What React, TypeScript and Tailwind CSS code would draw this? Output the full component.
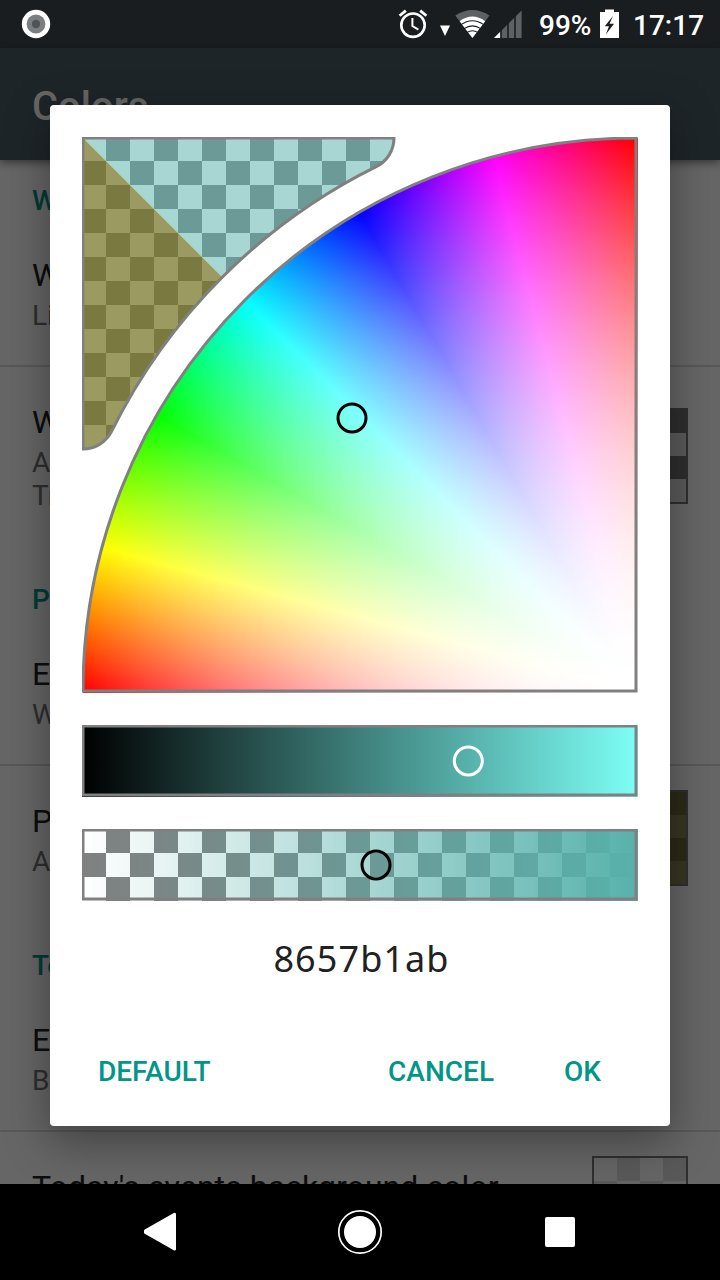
import React from "react";

const LABEL = "h-[33px] text-[28px] leading-[33px] whitespace-nowrap";
const TITLE = "h-[38px] text-[32px] leading-[38px] whitespace-nowrap text-[#0d0d0d]";
const SUB = "h-[33px] text-[28px] leading-[33px] whitespace-nowrap text-[#2e2e2e]";

function Divider() {
  return <div className="h-[2px] shrink-0 bg-[#585858]" />;
}

function Swatch({ light, dark, startDark = false }: { light: string; dark: string; startDark?: boolean }) {
  const cells = Array.from({ length: 16 }, (_, i) => (i + Math.floor(i / 4)) % 2 === (startDark ? 0 : 1));
  return (
    <div className="grid h-24 w-24 shrink-0 grid-cols-4 grid-rows-4 border-2 border-[#2f2f2f]">
      {cells.map((isDark, i) => (
        <div key={i} style={{ backgroundColor: isDark ? dark : light }} />
      ))}
    </div>
  );
}

function StatusBar() {
  return (
    <div className="flex h-12 shrink-0 items-start bg-[#191d20] text-[28px] font-medium leading-[33px] text-white">
      <svg width="400" height="48" viewBox="0 0 400 48" className="shrink-0">
        <circle cx="36" cy="24" r="14.2" fill="#fff" />
        <circle cx="36" cy="24" r="9.4" fill="#7b7f81" />
        <circle cx="36" cy="24" r="4.2" fill="#505456" />
      </svg>
      <svg width="140" height="48" viewBox="396 0 140 48" className="-ml-1 shrink-0">
        <g fill="none" stroke="#fff">
          <circle cx="413" cy="25.2" r="11.7" strokeWidth="2.6" />
          <path d="M412.4 18v8l6 3.6" strokeWidth="2" />
          <path d="M399.6 15.8l6.2-5.2M426.4 15.8l-6.2-5.2" strokeWidth="2.8" />
        </g>
        <path d="M440 25.5h10l-5 10.5z" fill="#fff" />
        <path d="M472.4 38L455.3 15.6Q472.4 4.6 489.5 15.6z" fill="#5d6163" />
        <path d="M472.4 38L459.6 21.2Q472.4 12 485.2 21.2z" fill="#fff" />
        <g fill="none" stroke="#191d20" strokeWidth="1.1">
          <path d="M461 24.6q11.400-7.800 22.800 0M464 28.600q8.400-5.400 16.800 0M467 32.400q5.400-3.200 10.800 0" />
        </g>
        <path d="M494 38L521.600 10.500V38z" fill="#5d6163" />
        <path d="M494 38l6.500-6.400V38z" fill="#fff" />
        <path d="M501 10v28M508 10v28M515 10v28" stroke="#191d20" strokeWidth="1.6" />
      </svg>
      <span className="mt-[9px] w-[60px] pl-[3px]">99%</span>
      <svg width="32" height="48" viewBox="596 0 32 48" className="shrink-0">
        <path d="M600 12h5V9.400h9V12h5v26h-19z" fill="#fff" />
        <path d="M613 16l-8.200 10.300h4.200l-3.200 8.200 8.200-10.700h-4.500z" fill="#191d20" />
      </svg>
      <span className="mt-[9px] pl-[5px]">17:17</span>
    </div>
  );
}

function SettingsPage() {
  return (
    <div className="flex h-[1184px] flex-col overflow-hidden bg-[#666]">
      <StatusBar />
      <div className="relative h-28 shrink-0 bg-[#1e2528] pl-8 pt-[35px] text-[40px] font-medium leading-[47px] text-[#666] shadow-[0_3px_8px_rgba(0,0,0,0.45)]">
        Colors
      </div>
      <div className="flex flex-col">
        <div className={`${LABEL} ml-8 mt-6 font-medium text-[#003c36]`}>W</div>
        <div className={`${TITLE} ml-8 mt-[39px]`}>W</div>
        <div className={`${SUB} mb-[33px] ml-8 mt-[5px]`}>Li</div>
        <Divider />
        <div className="flex h-[145px] justify-between px-8 pt-9">
          <div>
            <div className={TITLE}>W</div>
            <div className={`${SUB} mt-[5px]`}>A</div>
            <div className={SUB}>Tr</div>
          </div>
          <div className="pt-[5px]">
            <Swatch light="#5b5b5b" dark="#2e2e2e" />
          </div>
        </div>
        <div className={`${LABEL} ml-8 mt-[71px] font-medium text-[#003c36]`}>P</div>
        <div className={`${TITLE} ml-8 mt-[39px]`}>E</div>
        <div className={`${SUB} mb-[33px] ml-8 mt-[5px]`}>W</div>
        <Divider />
        <div className="flex h-[113px] justify-between px-8 pt-6">
          <div className="pt-3">
            <div className={TITLE}>P</div>
            <div className={`${SUB} mt-[5px]`}>A</div>
          </div>
          <Swatch light="#383623" dark="#2c2a17" />
        </div>
        <div className={`${LABEL} ml-8 mt-[70px] font-medium text-[#003c36]`}>To</div>
        <div className={`${TITLE} ml-8 mt-[39px]`}>E</div>
        <div className={`${SUB} mb-[33px] ml-8 mt-[5px]`}>B</div>
        <Divider />
        <div className="flex justify-between px-8 pt-6">
          <div className={`${TITLE} mt-3 tracking-[0.06px]`}>Today's events background color</div>
          <Swatch light="#656565" dark="#595959" />
        </div>
      </div>
    </div>
  );
}

function Checker({ id }: { id: string }) {
  return (
    <pattern id={id} width="48" height="48" patternUnits="userSpaceOnUse">
      <rect width="48" height="48" fill="#fff" />
      <path d="M24 0h24v24H24zM0 24h24v24H0z" fill="#808080" />
    </pattern>
  );
}

const PREVIEW = "M1 1H312A32 32 0 0 1 294.200 29.700A585 585 0 0 0 29.700 294.200A32 32 0 0 1 1 312Z";

/* White fades out with the square of the distance, so saturation = (r / R)². */
const SATURATION_STOPS = Array.from({ length: 33 }, (_, i) => {
  const t = i / 32;
  return `rgba(255,255,255,${(1 - t * t).toFixed(4)}) ${(t * 553).toFixed(2)}px`;
}).join(",");

function HueWheel() {
  return (
    <div className="relative h-[556px] w-[556px]">
      <div
        className="h-full w-full [clip-path:path('M1_556V554A553_553_0_0_1_554_1H556V556Z')]"
        style={{
          backgroundImage: `radial-gradient(circle at 554px 554px, ${SATURATION_STOPS}), conic-gradient(from 270deg at 554px 554px, #f00 0deg, #ff0 15deg, #0f0 30deg, #0ff 45deg, #00f 60deg, #f0f 75deg, #f00 90deg, #f00 225deg, #f00 360deg)`,
        }}
      />
      <svg className="absolute inset-0" width="556" height="556" viewBox="0 0 556 556">
        <defs>
          <Checker id="preview-checker" />
          <clipPath id="preview-clip">
            <path d={PREVIEW} />
          </clipPath>
        </defs>
        <g clipPath="url(#preview-clip)">
          <rect width="320" height="320" fill="url(#preview-checker)" />
          <path d="M0 0H320V320Z" fill="#57b1ab" fillOpacity="0.525" />
          <path d="M0 0V320H320Z" fill="#78782a" fillOpacity="0.74" />
        </g>
        <g fill="none" stroke="#808080" strokeWidth="3">
          <path d={PREVIEW} />
          <path d="M1 554A553 553 0 0 1 554 1V554Z" />
        </g>
        <circle cx="270" cy="281" r="14" fill="none" stroke="#000" strokeWidth="3" />
      </svg>
    </div>
  );
}

function ValueBar() {
  return (
    <svg width="556" height="72" viewBox="0 0 556 72" className="mt-8 block">
      <defs>
        <linearGradient id="value">
          <stop offset="0" stopColor="#000" />
          <stop offset="1" stopColor="#7dfff6" />
        </linearGradient>
      </defs>
      <rect width="556" height="72" fill="url(#value)" />
      <rect x="1" y="1" width="553" height="69" fill="none" stroke="#808080" strokeWidth="3" />
      <circle cx="386.300" cy="36" r="14" fill="none" stroke="#fff" strokeWidth="3" />
    </svg>
  );
}

function AlphaBar() {
  return (
    <svg width="556" height="72" viewBox="0 0 556 72" className="mt-8 block">
      <defs>
        <Checker id="alpha-checker" />
        <linearGradient id="alpha">
          <stop offset="0" stopColor="#57b1ab" stopOpacity="0" />
          <stop offset="1" stopColor="#57b1ab" />
        </linearGradient>
      </defs>
      <rect width="556" height="72" fill="url(#alpha-checker)" />
      <rect width="556" height="72" fill="url(#alpha)" />
      <rect x="1" y="1" width="553" height="69" fill="none" stroke="#808080" strokeWidth="3" />
      <circle cx="294" cy="36" r="14" fill="none" stroke="#000" strokeWidth="3" />
    </svg>
  );
}

function ColorDialog() {
  return (
    <div className="absolute left-[50px] top-[105px] flex h-[1021px] w-[620px] flex-col rounded-[4px] bg-white px-8 pt-8 shadow-[0_14px_44px_2px_rgba(0,0,0,0.36)]">
      <HueWheel />
      <ValueBar />
      <AlphaBar />
      <div className="mt-[33px] h-[50px] pl-[3px] text-center font-['Noto_Sans',sans-serif] text-[36px] leading-[50px] tracking-[1.1px] text-[#212121]">
        8657b1ab
      </div>
      <div className="mt-[71px] flex text-[28px] font-medium leading-[33px] text-[#009688]">
        <button className="ml-4">DEFAULT</button>
        <div className="ml-auto mr-[37px] flex gap-[70px]">
          <button>CANCEL</button>
          <button>OK</button>
        </div>
      </div>
    </div>
  );
}

function NavigationBar() {
  return (
    <div className="relative flex h-24 items-center bg-black">
      <svg width="720" height="96" viewBox="0 0 720 96" fill="#fff">
        <path d="M145.500 46.800L174.500 30.200V65L145.500 48.400Z" stroke="#fff" strokeWidth="3" strokeLinejoin="round" />
        <circle cx="360" cy="48" r="16" />
        <circle cx="360" cy="48" r="21.200" fill="none" stroke="#fff" strokeWidth="1.700" />
        <rect x="545" y="33" width="30" height="30" rx="2" />
      </svg>
    </div>
  );
}

export default function App() {
  return (
    <div className="relative h-[1280px] w-[720px] overflow-hidden bg-black font-[Roboto,sans-serif]">
      <div className="relative h-[1184px] overflow-hidden">
        <SettingsPage />
        <ColorDialog />
      </div>
      <NavigationBar />
    </div>
  );
}
